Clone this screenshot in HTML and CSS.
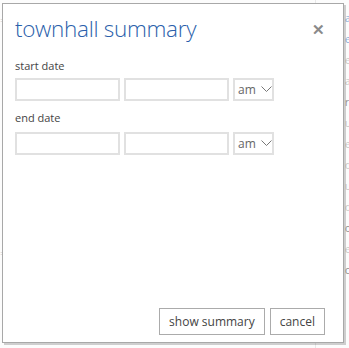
FILE: index.html
```html
<!DOCTYPE html>
<html>
<head>
  <meta charset="utf-8">
  <title>townhall summary</title>
  <link rel="stylesheet" href="styles.css">
</head>
<body>
  <div class="page">
    <div class="page-left">
      <span class="frag">=</span>
      <span class="frag">=</span>
    </div>
    <div class="page-right">
      <span class="frag link">a</span>
      <span class="frag link">e</span>
      <span class="frag">e</span>
      <span class="frag">a</span>
      <span class="frag dark">r</span>
      <span class="frag">u</span>
      <span class="frag">e</span>
      <span class="frag">d</span>
      <span class="frag">u</span>
      <span class="frag">d</span>
      <span class="frag dark">o</span>
      <span class="frag">e</span>
      <span class="frag dark">c</span>
    </div>
  </div>

  <div class="overlay"></div>

  <div class="dialog">
    <div class="dialog-head">
      <h1 class="dialog-title">townhall summary</h1>
      <button class="close">&#x2715;</button>
    </div>

    <div class="field">
      <label class="field-label">start date</label>
      <div class="field-row">
        <input type="text" class="date-input">
        <input type="text" class="date-input">
        <div class="ampm">am <svg width="11" height="7" viewBox="0 0 11 7"><path d="M0.5 0.5 L5.5 5.5 L10.5 0.5" fill="none" stroke="#777" stroke-width="1"/></svg></div>
      </div>
    </div>

    <div class="field field-end">
      <label class="field-label">end date</label>
      <div class="field-row">
        <input type="text" class="date-input">
        <input type="text" class="date-input">
        <div class="ampm">am <svg width="11" height="7" viewBox="0 0 11 7"><path d="M0.5 0.5 L5.5 5.5 L10.5 0.5" fill="none" stroke="#777" stroke-width="1"/></svg></div>
      </div>
    </div>

    <div class="dialog-foot">
      <button class="btn">show summary</button>
      <button class="btn">cancel</button>
    </div>
  </div>
</body>
</html>
```

FILE: styles.css
```css
* {
    box-sizing: border-box;
}

html, body {
    margin: 0;
    height: 100%;
}

body {
    font-family: "Open Sans", "Noto Sans", sans-serif;
    background-color: #fafafa;
    position: relative;
    overflow: hidden;
}

.page {
    display: flex;
    justify-content: space-between;
    height: 100%;
}

.page-left {
    display: flex;
    flex-direction: column;
    padding-top: 10px;
    gap: 212px;
    width: 8px;
}

.page-right {
    display: flex;
    flex-direction: column;
    width: 34px;
    padding: 8px 0 0 29px;
    border-left: 1px solid #d6d6d6;
    font-size: 13px;
    line-height: 21px;
}

.frag {
    color: #9a9a9a;
    font-size: 10px;
    line-height: 21px;
}

.frag.link {
    color: #2a6ab8;
}

.frag.dark {
    color: #333;
}

.overlay {
    position: absolute;
    inset: 0;
    background: rgba(255, 255, 255, 0.45);
}

.dialog {
    position: absolute;
    left: 2px;
    top: 3px;
    width: 342px;
    height: 340px;
    background: #fff;
    border: 1px solid #a8a8a8;
    box-shadow: 2px 2px 0 rgba(0, 0, 0, 0.18);
    padding: 0 18px 7px 12px;
    display: flex;
    flex-direction: column;
}

.dialog-head {
    display: flex;
    justify-content: space-between;
    align-items: flex-start;
    margin-bottom: 10px;
}

.dialog-title {
    margin: 0;
    padding-top: 7px;
    font-family: "Open Sans", sans-serif;
    font-weight: 300;
    font-size: 22.5px;
    line-height: 36px;
    color: #2b5fab;
    letter-spacing: -0.3px;
}

.close {
    border: none;
    background: none;
    color: #8a8a8a;
    font-size: 15px;
    font-weight: bold;
    padding: 0;
    margin-top: 17px;
    cursor: pointer;
}

.field {
    display: flex;
    flex-direction: column;
    margin-bottom: 8px;
}

.field-label {
    font-size: 11px;
    color: #444;
    line-height: 18px;
    margin-bottom: 3px;
}

.field-end .field-label {
    margin-bottom: 5px;
}

.field-row {
    display: flex;
    gap: 4px;
}

.date-input {
    width: 105px;
    height: 23px;
    border: 2px solid #e1e1e1;
    padding: 2px 4px;
    font-size: 13px;
    outline: none;
    margin: 0;
}

.ampm {
    width: 41px;
    height: 23px;
    border: 2px solid #e1e1e1;
    display: flex;
    align-items: center;
    gap: 5px;
    padding-left: 3px;
    font-size: 12px;
    color: #666;
}

.dialog-foot {
    margin-top: auto;
    display: flex;
    justify-content: flex-end;
    gap: 5px;
}

.btn {
    font-family: "Open Sans", sans-serif;
    font-size: 12px;
    color: #444;
    background: #fff;
    border: 1px solid #ababab;
    height: 27px;
    padding: 0 9px;
    margin: 0;
    cursor: pointer;
}
```
